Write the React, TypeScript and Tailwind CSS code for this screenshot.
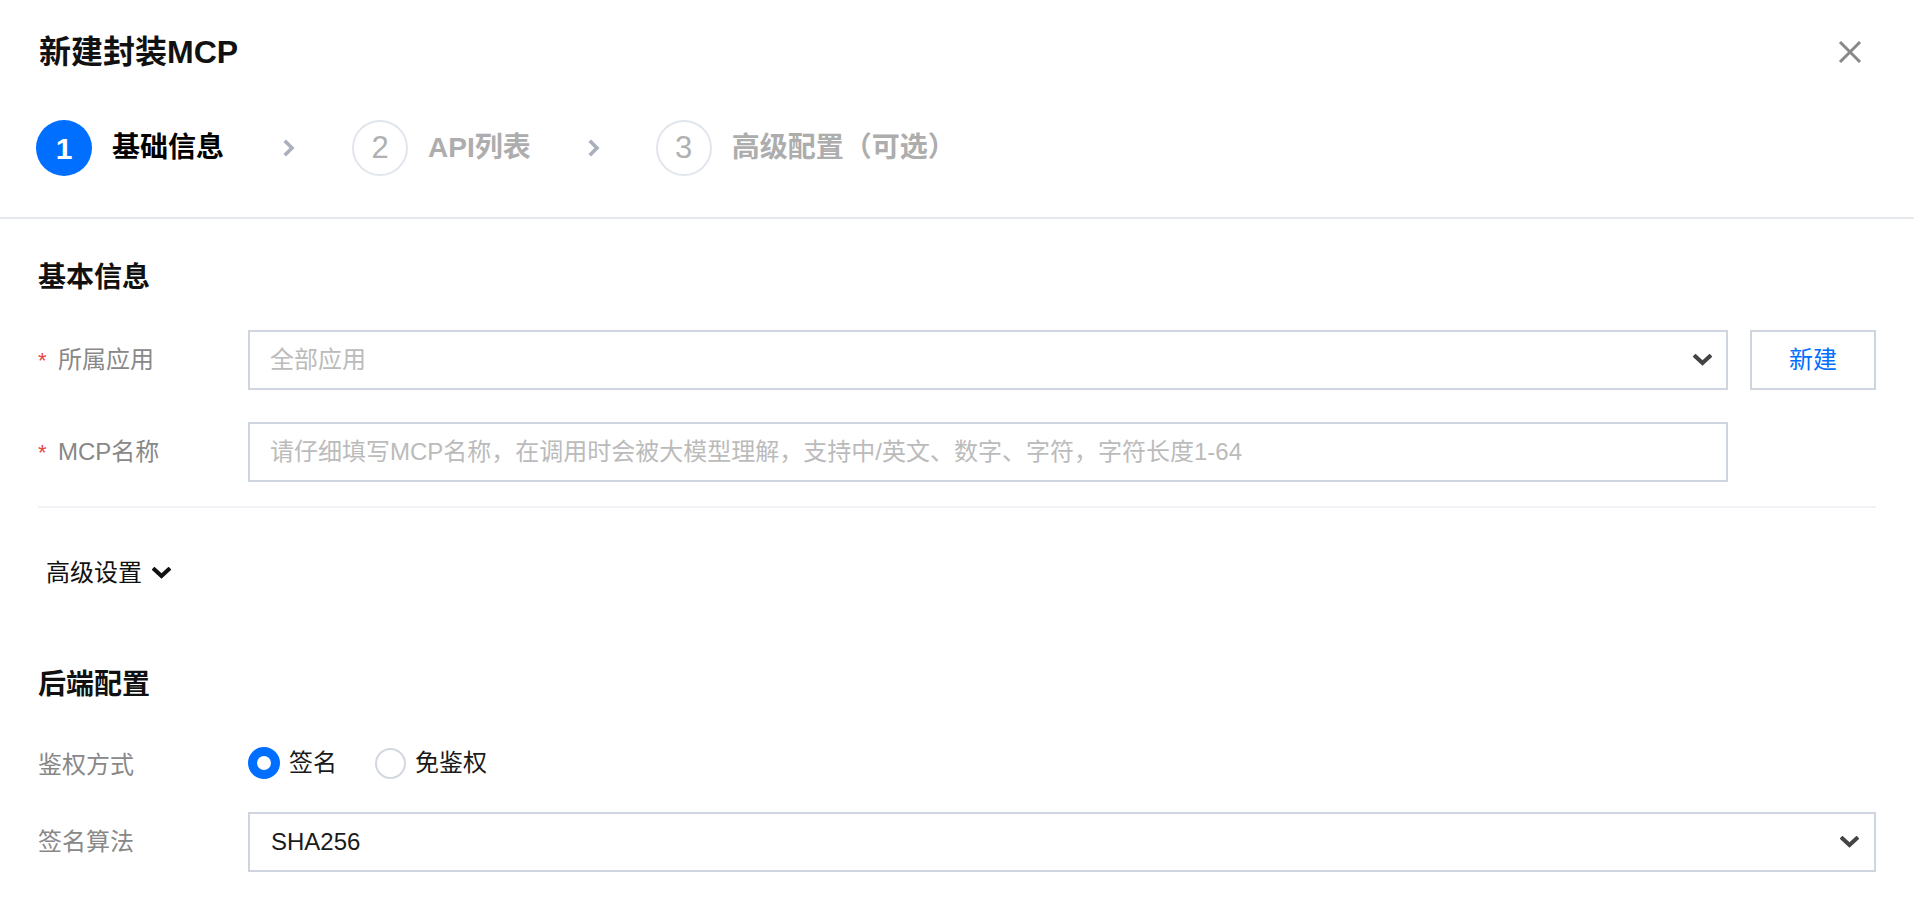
import React from "react";

function ChevronDown({ className = "" }: { className?: string }) {
  return (
    <svg className={className} width="19" height="12" viewBox="0 0 19 12" fill="none">
      <polyline points="2.5,2.5 9.5,9 16.5,2.5" stroke="currentColor" strokeWidth="4" strokeLinecap="square" />
    </svg>
  );
}

function StepArrow() {
  return (
    <svg width="12" height="18" viewBox="0 0 12 18" fill="none">
      <polyline points="3,3 9,9 3,15" stroke="#a9b0bd" strokeWidth="3.6" strokeLinecap="square" />
    </svg>
  );
}

function Step({ n, label, active }: { n: number; label: string; active?: boolean }) {
  return (
    <div className="flex items-center gap-[20px]">
      {active ? (
        <div className="w-[56px] h-[56px] rounded-full bg-[#006eff] text-white flex items-center justify-center text-[30px] font-bold">
          {n}
        </div>
      ) : (
        <div className="w-[56px] h-[56px] rounded-full border-2 border-[#e1e5ec] text-[#b0b0b0] flex items-center justify-center text-[31px]">
          {n}
        </div>
      )}
      <span className={`text-[28px] font-bold leading-[40px] ${active ? "text-black" : "text-[#adadad]"}`}>{label}</span>
    </div>
  );
}

function Label({ text, required }: { text: string; required?: boolean }) {
  return (
    <div className="w-[210px] shrink-0 flex items-center text-[24px] text-[#888888]">
      {required && <span className="text-[#e54545] w-[20px] text-[22px]">*</span>}
      <span>{text}</span>
    </div>
  );
}

export default function App() {
  return (
    <div className="w-full h-[908px] overflow-hidden bg-white text-[#1a1a1a] font-['Liberation_Sans','Noto_Sans_CJK_SC',sans-serif]">
      {/* Header */}
      <header className="h-[219px] border-b-2 border-[#e5e8ed] pt-[30px]">
        <div className="flex items-center justify-between pl-[39px] pr-[52px] h-[44px]">
          <h1 className="text-[32px] font-bold leading-[44px] text-[#111]">新建封装MCP</h1>
          <button className="w-[24px] h-[24px]">
            <svg width="24" height="24" viewBox="0 0 24 24" fill="none">
              <path d="M2 2 L22 22 M22 2 L2 22" stroke="#888888" strokeWidth="3" />
            </svg>
          </button>
        </div>
        <div className="flex items-center pl-[36px] mt-[46px] h-[56px]">
          <Step n={1} label="基础信息" active />
          <div className="ml-[59px] mr-[57px]">
            <StepArrow />
          </div>
          <Step n={2} label="API列表" />
          <div className="ml-[57px] mr-[56px]">
            <StepArrow />
          </div>
          <Step n={3} label="高级配置（可选）" />
        </div>
      </header>

      {/* Body */}
      <main className="px-[38px]">
        <h2 className="mt-[39px] h-[40px] leading-[40px] text-[28px] font-bold text-[#111]">基本信息</h2>

        <div className="mt-[32px] flex h-[60px]">
          <Label text="所属应用" required />
          <div className="flex-1 flex gap-[22px]">
            <div className="flex-1 border-2 border-[#cfd5de] flex items-center justify-between pl-[20px] pr-[14px] text-[24px] text-[#bbbbbb]">
              <span>全部应用</span>
              <ChevronDown className="text-[#444]" />
            </div>
            <button className="w-[126px] border-2 border-[#cfd5de] text-[24px] text-[#006eff]">新建</button>
          </div>
        </div>

        <div className="mt-[32px] flex h-[60px]">
          <Label text="MCP名称" required />
          <div className="flex-1 flex">
            <div className="flex-1 border-2 border-[#cfd5de] flex items-center pl-[20px] text-[24px] text-[#bbbbbb]">
              请仔细填写MCP名称，在调用时会被大模型理解，支持中/英文、数字、字符，字符长度1-64
            </div>
            <div className="w-[148px]" />
          </div>
        </div>

        <div className="mt-[24px] h-[2px] bg-[#f0f2f5]" />

        <div className="mt-[45px] h-[40px] flex items-center gap-[10px] pl-[8px] text-[24px] text-[#111]">
          <span>高级设置</span>
          <ChevronDown className="text-[#111]" />
        </div>

        <h2 className="mt-[72px] h-[40px] leading-[40px] text-[28px] font-bold text-[#111]">后端配置</h2>

        <div className="mt-[38px] flex h-[40px]">
          <div className="pt-[3px] flex">
            <Label text="鉴权方式" />
          </div>
          <div className="flex items-center text-[24px] text-[#1a1a1a]">
            <span className="w-[32px] h-[32px] rounded-full border-[9px] border-[#006eff] bg-white" />
            <span className="ml-[9px]">签名</span>
            <span className="ml-[38px] w-[31px] h-[31px] rounded-full border-2 border-[#d3d8e0] bg-white" />
            <span className="ml-[9px]">免鉴权</span>
          </div>
        </div>

        <div className="mt-[29px] flex h-[60px]">
          <Label text="签名算法" />
          <div className="flex-1 border-2 border-[#cfd5de] flex items-center justify-between pl-[21px] pr-[15px] text-[24px] text-[#1a1a1a]">
            <span>SHA256</span>
            <ChevronDown className="text-[#444]" />
          </div>
        </div>
      </main>
    </div>
  );
}
